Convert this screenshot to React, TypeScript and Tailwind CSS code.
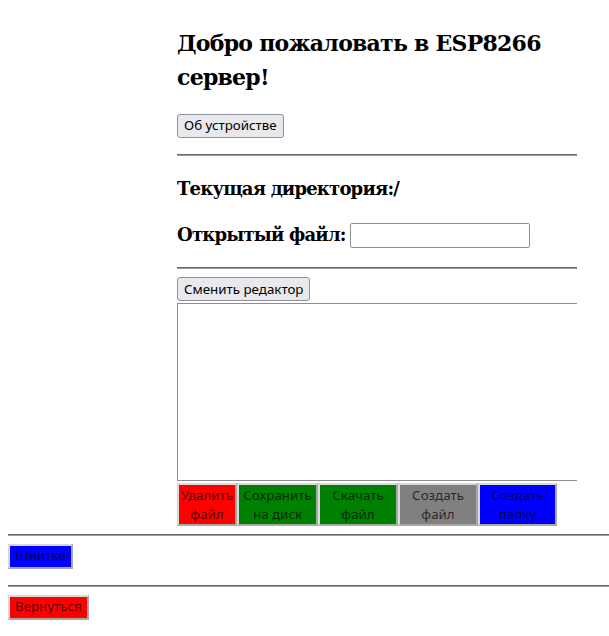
const serif = { fontFamily: '"DejaVu Serif", "Liberation Serif", serif' }

const ACTIONS = [
  { label: ['Удалить', 'файл'], cls: 'w-[60px] bg-[#ff0000]' },
  { label: ['Сохранить', 'на диск'], cls: 'w-[81px] bg-[#008000]' },
  { label: ['Скачать', 'файл'], cls: 'w-[80px] bg-[#008000]' },
  { label: ['Создать', 'файл'], cls: 'w-[80px] bg-[#808080]' },
  { label: ['Создать', 'папку'], cls: 'w-[79px] bg-[#0000ff]' },
]

function PlainButton({ children }: { children: React.ReactNode }) {
  return (
    <button
      type="button"
      className="h-[24px] px-[6px] rounded-[3px] border border-[#8f8f9d] bg-[#e9e9ed] text-[13.33px] leading-none text-black"
    >
      {children}
    </button>
  )
}

function ColorButton({ cls, children }: { cls: string; children: React.ReactNode }) {
  return (
    <button
      type="button"
      className={`${cls} border-2 border-t-[#d9d9d9] border-l-[#d9d9d9] border-r-[#a8a8a8] border-b-[#a8a8a8] text-[13.33px] text-black/70`}
    >
      {children}
    </button>
  )
}

function Rule() {
  return <div className="h-[2px] border-t border-t-[#6a6a6a] border-b border-b-[#9a9a9a]" />
}

export default function App() {
  return (
    <div className="min-h-[636px] bg-white pt-[26px] px-2 text-black overflow-hidden" style={{ fontFamily: '"Noto Sans", "DejaVu Sans", sans-serif' }}>
      <div className="ml-[169px] w-[400px]">
        <h1 className="text-[22px] leading-[34px] font-bold tracking-[-0.75px]" style={serif}>
          Добро пожаловать в ESP8266 сервер!
        </h1>
        <div className="mt-[18px]">
          <PlainButton>Об устройстве</PlainButton>
        </div>
        <div className="mt-[16px]">
          <Rule />
        </div>
        <h3 className="mt-[21px] text-[18px] leading-[24px] font-bold tracking-[-0.8px]" style={serif}>
          Текущая директория:/
        </h3>
        <div className="mt-[22px] flex items-center gap-[4px]">
          <span className="text-[18px] leading-[24px] font-bold tracking-[-0.8px]" style={serif}>
            Открытый файл:
          </span>
          <input className="w-[180px] h-[25px] border border-[#8f8f9d] rounded-[2px]" />
        </div>
        <div className="mt-[19px]">
          <Rule />
        </div>
        <div className="mt-[7px]">
          <PlainButton>Сменить редактор</PlainButton>
        </div>
        <div className="mt-[2px] h-[178px] border-l border-t border-b border-[#8f8f8f]" />
        <div className="mt-[2px] flex">
          {ACTIONS.map(a => (
            <ColorButton key={a.label.join(' ')} cls={`${a.cls} h-[43px] leading-[19px] whitespace-nowrap overflow-hidden`}>
              {a.label[0]}
              <br />
              {a.label[1]}
            </ColorButton>
          ))}
        </div>
      </div>
      <div className="mt-[8px] -mr-2">
        <Rule />
      </div>
      <div className="mt-[6px] h-[25px]">
        <ColorButton cls="h-[25px] px-[5px] bg-[#0000ff] leading-none">Шнитке</ColorButton>
      </div>
      <div className="mt-[18px] -mr-2">
        <Rule />
      </div>
      <div className="mt-[6px] h-[25px]">
        <ColorButton cls="h-[25px] px-[5px] bg-[#ff0000] leading-none">Вернуться</ColorButton>
      </div>
    </div>
  )
}
